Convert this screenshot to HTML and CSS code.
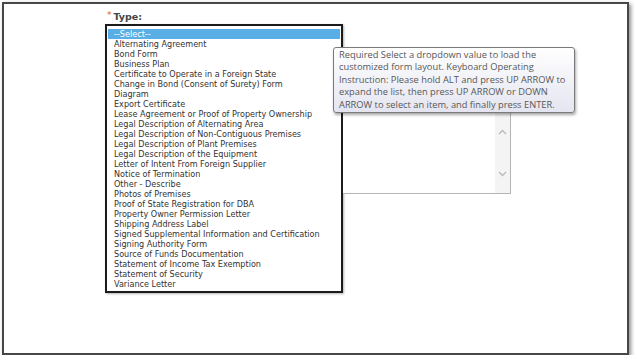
FILE: index.html
```html
<!DOCTYPE html>
<html>
<head>
<meta charset="utf-8">
<link rel="stylesheet" href="styles.css">
</head>
<body>
<div class="frame">
  <div class="field">
    <div class="label"><span class="req">*</span><span class="label-text">Type:</span></div>
    <div class="row">
      <div class="listbox">
        <div class="opt selected">--Select--</div>
        <div class="opt">Alternating Agreement</div>
        <div class="opt">Bond Form</div>
        <div class="opt">Business Plan</div>
        <div class="opt">Certificate to Operate in a Foreign State</div>
        <div class="opt">Change in Bond (Consent of Surety) Form</div>
        <div class="opt">Diagram</div>
        <div class="opt">Export Certificate</div>
        <div class="opt">Lease Agreement or Proof of Property Ownership</div>
        <div class="opt">Legal Description of Alternating Area</div>
        <div class="opt">Legal Description of Non-Contiguous Premises</div>
        <div class="opt">Legal Description of Plant Premises</div>
        <div class="opt">Legal Description of the Equipment</div>
        <div class="opt">Letter of Intent From Foreign Supplier</div>
        <div class="opt">Notice of Termination</div>
        <div class="opt">Other - Describe</div>
        <div class="opt">Photos of Premises</div>
        <div class="opt">Proof of State Registration for DBA</div>
        <div class="opt">Property Owner Permission Letter</div>
        <div class="opt">Shipping Address Label</div>
        <div class="opt">Signed Supplemental Information and Certification</div>
        <div class="opt">Signing Authority Form</div>
        <div class="opt">Source of Funds Documentation</div>
        <div class="opt">Statement of Income Tax Exemption</div>
        <div class="opt">Statement of Security</div>
        <div class="opt">Variance Letter</div>
      </div>
      <div class="memo">
        <div class="memo-body"></div>
        <div class="vscroll">
          <svg class="chev up" width="9" height="6" viewBox="0 0 9 6"><path d="M1 5 L4.5 1.5 L8 5" fill="none" stroke="#b9b9b9" stroke-width="1.3"/></svg>
          <svg class="chev down" width="9" height="6" viewBox="0 0 9 6"><path d="M1 1 L4.5 4.5 L8 1" fill="none" stroke="#b9b9b9" stroke-width="1.3"/></svg>
        </div>
      </div>
    </div>
  </div>
  <div class="tooltip">Required Select a dropdown value to load the<br>customized form layout. Keyboard Operating<br>Instruction: Please hold ALT and press UP ARROW to<br>expand the list, then press UP ARROW or DOWN<br>ARROW to select an item, and finally press ENTER.</div>
</div>
</body>
</html>
```
FILE: styles.css
```css
html, body {
  margin: 0;
  padding: 0;
  background: #ffffff;
}
.frame {
  position: relative;
  margin: 2px 0 0 2px;
  width: 623px;
  height: 349px;
  border: 2px solid #474747;
  background: #ffffff;
  box-shadow: 2px 2px 4px rgba(0, 0, 0, 0.45);
}
.field {
  display: flex;
  flex-direction: column;
  padding: 6px 0 0 101px;
}
.label {
  display: flex;
  align-items: flex-start;
  height: 13px;
  margin-left: 2px;
  font-family: "DejaVu Sans", Verdana, sans-serif;
  color: #3c3c3c;
}
.req {
  color: #e2572b;
  font-size: 9px;
  line-height: 10px;
  margin-right: 2px;
}
.label-text {
  font-size: 9.5px;
  line-height: 13px;
  font-weight: bold;
  color: #454545;
}
.row {
  display: flex;
  align-items: flex-start;
  margin-top: 1px;
}
.listbox {
  width: 234px;
  padding: 3px 0 2px 0;
  border: 2px solid #1b1b1b;
  box-shadow: 1px 1px 2px rgba(0, 0, 0, 0.3);
  font-family: "DejaVu Sans", Verdana, sans-serif;
  font-size: 8.1px;
  color: #333333;
  background: #ffffff;
}
.opt {
  height: 10px;
  line-height: 10px;
  padding-left: 6px;
  margin: 0 1px;
  white-space: nowrap;
}
.opt.selected {
  background: #5aaee6;
  color: #ffffff;
}
.memo {
  display: flex;
  margin-top: 84px;
  width: 167px;
  height: 84px;
  border: 1px solid #b5b5b5;
  border-left: none;
  background: #ffffff;
}
.memo-body {
  flex: 1;
}
.vscroll {
  width: 15px;
  background: #f4f4f4;
  display: flex;
  flex-direction: column;
  align-items: center;
  justify-content: space-between;
  padding: 20px 0 16px 0;
}
.chev {
  display: block;
}
.tooltip {
  position: absolute;
  left: 329px;
  top: 43px;
  width: 230px;
  height: 62px;
  padding: 1px 5px 1px 5px;
  border: 1px solid #7a7a7a;
  border-radius: 3px;
  background: linear-gradient(#ffffff, #e4e5f0);
  box-shadow: 1px 2px 3px rgba(0, 0, 0, 0.35);
  font-family: "Open Sans", "Noto Sans", sans-serif;
  font-size: 9.3px;
  line-height: 12.4px;
  color: #575757;
  white-space: nowrap;
}
```
